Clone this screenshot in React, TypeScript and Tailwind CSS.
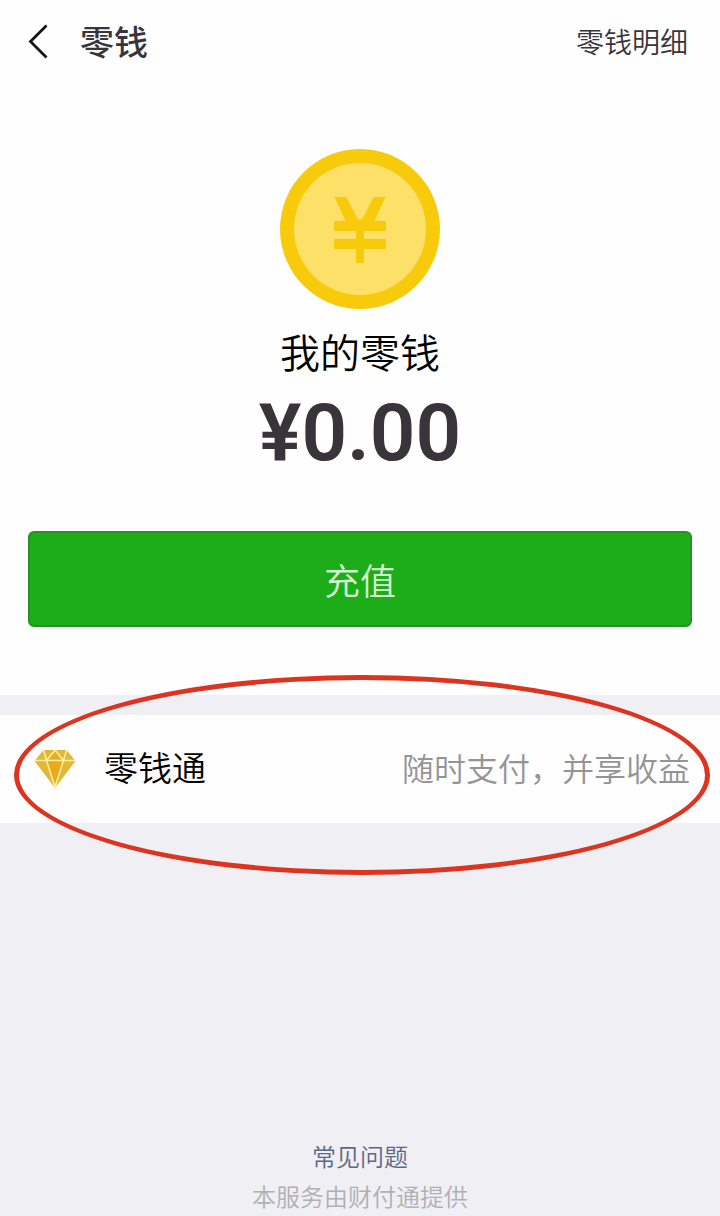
import React from "react";

const BackIcon = () => (
  <svg width="20" height="36" viewBox="0 0 20 36" fill="none" aria-hidden="true">
    <path d="M18.500 2.500 2.500 18.500 18.500 34.500" stroke="#141414" strokeWidth="2.8" />
  </svg>
);

const CoinIcon = () => (
  <svg width="160" height="160" viewBox="0 0 160 160" aria-hidden="true">
    <circle cx="80" cy="80" r="80" fill="#f7ca0c" />
    <circle cx="80" cy="80" r="66" fill="#fde068" />
    <path
      d="M54.5 48h12L77 69q3 4 6 0l10.500-21h12L94.500 72H106v10H84v8h22v10H84v14h-8v-14H54V90h22v-8H54V72h11.500Z"
      fill="#f7ca0c"
    />
  </svg>
);

const DiamondIcon = () => (
  <svg width="42" height="44" viewBox="0 -4 42 44" aria-hidden="true">
    <path d="M9.500 1h23l9 11L21 39 .5 12Z" fill="#e3b738" />
    <path d="M12.500 12h17L21 38Z" fill="#eda91c" />
    <path d="M21 1l8.500 10h-17Z" fill="#e6ae26" />
    <path
      d="M.5 11.500h41M9.500 1l3 10.500L21 1l8.500 10.500 3-10.500M12.500 11.500 21 38l8.500-26.500"
      fill="none"
      stroke="#fdf0a0"
      strokeWidth="1.600"
    />
  </svg>
);

const App = () => {
  return (
    <div className="flex min-h-screen flex-col bg-[#efeff4] font-['Noto_Sans_CJK_SC',sans-serif] font-[350]">
      <div className="bg-[#fefefe] pb-17">
        {/* HEADER */}
        <header className="flex h-20 items-center justify-between pt-0.5 pr-8 pl-7">
          <div className="flex items-center gap-8">
            <button type="button" aria-label="返回">
              <BackIcon />
            </button>
            <h1 className="text-[34px] leading-10 font-medium text-[#38353a]">零钱</h1>
          </div>
          <a href="#detail" className="text-[28px] leading-10 text-[#38353a]">
            零钱明细
          </a>
        </header>

        {/* BALANCE */}
        <main className="flex flex-col items-center px-7 pt-[69px]">
          <CoinIcon />
          <p className="mt-3.5 text-[40px] leading-14 text-black">我的零钱</p>
          <p className="mt-3.5 font-[Roboto,sans-serif] text-[80px] leading-20 font-semibold text-[#38353a]">
            ¥0.00
          </p>
          <button
            type="button"
            className="mt-[58px] h-24 w-full rounded-md border-2 border-[#279127] bg-[#1cad19] text-[36px] text-[#d5f5d4]"
          >
            充值
          </button>
        </main>
      </div>

      {/* LINGQIANTONG */}
      <section className="relative mt-5 bg-[#fefefe]">
        <a href="#lqt" className="flex h-27 items-center justify-between pr-[30px] pb-1 pl-[34px]">
          <span className="flex items-center gap-7">
            <DiamondIcon />
            <span className="text-[34px] leading-10 text-black">零钱通</span>
          </span>
          <span className="text-[32px] leading-10 text-[#949496]">随时支付，并享收益</span>
        </a>
        <div className="pointer-events-none absolute -top-10 right-2.5 -bottom-13 left-3.5 rounded-[50%] border-5 border-[#dc3420]" />
      </section>

      {/* FOOTER */}
      <footer className="mt-auto flex flex-col items-center text-2xl">
        <a href="#faq" className="leading-10 text-[#5d6884]">
          常见问题
        </a>
        <p className="leading-10 text-[#b0b0b5]">本服务由财付通提供</p>
      </footer>
    </div>
  );
};

export default App;
